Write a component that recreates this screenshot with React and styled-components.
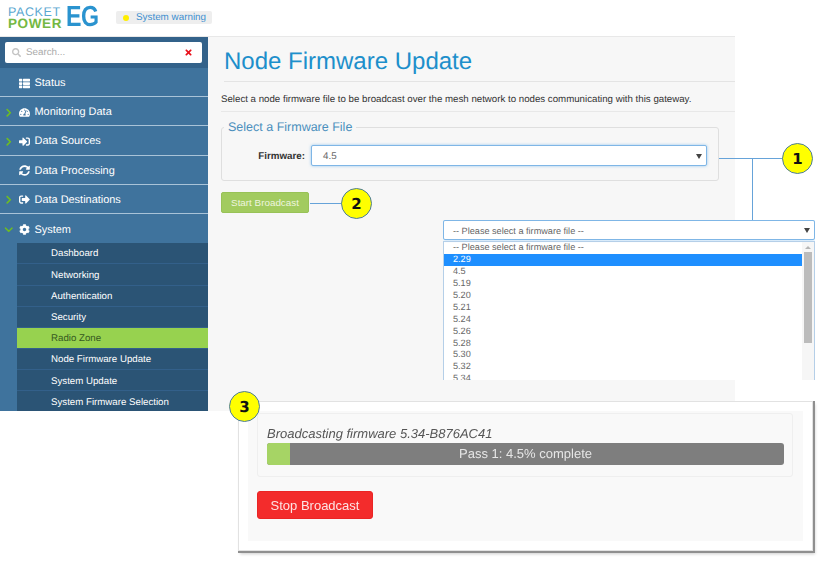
import React from "react";
import styled, { createGlobalStyle } from "styled-components";
import {
  FaThList,
  FaTachometerAlt,
  FaSignInAlt,
  FaSyncAlt,
  FaSignOutAlt,
  FaCog,
  FaTimes,
  FaSearch,
  FaChevronRight,
  FaChevronDown,
} from "react-icons/fa";

const GlobalStyle = createGlobalStyle`
  html, body {
    margin: 0;
    background: #fff;
    font-family: "Liberation Sans", Arial, sans-serif;
    text-rendering: geometricPrecision;
  }
  * { box-sizing: border-box; }
`;

const Page = styled.div`
  position: relative;
  width: 820px;
  height: 561px;
  overflow: hidden;
  background: #fff;
`;

// Header
const Header = styled.header`
  display: flex;
  align-items: flex-start;
  height: 37px;
  padding: 7px 0 0 8px;
  border-bottom: 1px solid #e8e8e8;
  width: 735px;
`;

const Logo = styled.div`
  display: flex;
  width: 108px;
  height: 22px;
`;

const LogoWords = styled.div`
  display: flex;
  flex-direction: column;
  width: 58px;
`;

const LogoPacket = styled.span`
  font-size: 12.5px;
  line-height: 10px;
  height: 10px;
  letter-spacing: 0.6px;
  color: #5aa7d0;
  white-space: nowrap;
`;

const LogoPower = styled.span`
  margin-top: 1px;
  font-size: 13.5px;
  line-height: 11px;
  font-weight: 700;
  letter-spacing: 0.6px;
  color: #74b843;
  white-space: nowrap;
`;

const LogoMark = styled.span`
  font-size: 29px;
  line-height: 21px;
  font-weight: 700;
  color: #2a93cf;
  transform: scaleX(0.8);
  transform-origin: left center;
  letter-spacing: -0.5px;
`;

const Warning = styled.div`
  display: flex;
  align-items: center;
  height: 13px;
  margin-top: 4px;
  padding: 0 6px 0 7px;
  background: #eeeeee;
  border-radius: 2px;
  font-size: 9.85px;
  color: #3d8fd0;
  gap: 7px;
`;

const WarningDot = styled.span`
  width: 6px;
  height: 6px;
  border-radius: 50%;
  background: #ffee00;
`;

// Sidebar
const Main = styled.div`
  display: flex;
  width: 735px;
  height: 374px;
`;

const Sidebar = styled.nav`
  width: 208px;
  flex: none;
  background: #3f739d;
  color: #fff;
  overflow: hidden;
`;

const SearchStrip = styled.div`
  height: 31px;
  padding: 5px 6px 5px 5px;
  background: #33628a;
`;

const SearchBox = styled.div`
  display: flex;
  align-items: center;
  height: 21px;
  padding: 0 9px 0 7px;
  background: #fff;
  border-radius: 2px;
  font-size: 9.8px;
  color: #aaa;
  gap: 5px;
`;

const SearchText = styled.span`
  flex: 1;
`;

const NavRow = styled.div`
  position: relative;
  display: flex;
  align-items: center;
  height: 29.2px;
  padding: 2px 0 0 18px;
  font-size: 10.95px;
  border-bottom: ${(p) => (p.$last ? "none" : "1px solid #a9c3d8")};
`;

const Chevron = styled.span`
  display: flex;
  justify-content: center;
  width: 10px;
  margin-left: -14px;
  margin-right: 4px;
  color: #6fbf1f;
  font-size: 9.5px;
`;

const NavIcon = styled.span`
  display: flex;
  justify-content: center;
  width: 12px;
  margin-right: 4.5px;
  font-size: 11px;
`;

const SubList = styled.div`
  margin-left: 17px;
  background: #2b5475;
`;

const SubItem = styled.div`
  display: flex;
  align-items: center;
  height: 21.2px;
  padding: 1.5px 0 0 34px;
  font-size: 9.7px;
  white-space: nowrap;
  border-bottom: 1px solid #33608a;
  background: ${(p) => (p.$active ? "#97d24f" : "transparent")};
  color: ${(p) => (p.$active ? "#35591f" : "#fff")};
`;

// Content
const Content = styled.main`
  flex: 1;
  background: #f7f7f7;
  padding: 0 0 0 13px;
`;

const Title = styled.h1`
  margin: 0 0 0 3px;
  height: 45px;
  padding-top: 10px;
  font-size: 24px;
  line-height: 30px;
  font-weight: 400;
  color: #1d8fcb;
  border-bottom: 1px solid #e4e4e4;
`;

const Intro = styled.p`
  margin: 0;
  height: 30px;
  padding-top: 12px;
  font-size: 9.7px;
  line-height: 12px;
  color: #333;
  white-space: nowrap;
  border-bottom: 1px solid #e8e8e8;
`;

const Group = styled.fieldset`
  width: 498px;
  height: 60px;
  margin: 9px 0 0;
  padding: 11px 11px 0 0;
  border: 1px solid #dfdfdf;
  border-radius: 3px;
  display: block;
`;

const GroupTitle = styled.legend`
  margin-left: 2px;
  padding: 0 4px;
  font-size: 12.5px;
  line-height: 13px;
  color: #4b8fbd;
`;

const FieldRow = styled.div`
  display: flex;
  align-items: center;
  justify-content: flex-end;
  gap: 6px;
`;

const FieldLabel = styled.label`
  padding-top: 2px;
  font-size: 9.8px;
  font-weight: 700;
  color: #333;
`;

const SelectBox = styled.div`
  display: flex;
  align-items: center;
  justify-content: space-between;
  width: ${(p) => p.$width}px;
  height: ${(p) => p.$height}px;
  padding: 1px 4px 0 ${(p) => p.$inset}px;
  background: #fff;
  border: 1px solid #7fb6e6;
  border-radius: 2px;
  box-shadow: 0 0 3px rgba(102, 175, 233, 0.7);
  font-size: ${(p) => p.$size}px;
  color: #666;
`;

const Caret = styled.span`
  width: 0;
  height: 0;
  border-left: 3px solid transparent;
  border-right: 3px solid transparent;
  border-top: 5px solid #444;
`;

const StartButton = styled.button`
  display: block;
  width: 88px;
  height: 21px;
  margin-top: 11px;
  padding: 0;
  background: #a2cb5f;
  border: 1px solid #98c257;
  border-radius: 2px;
  font: 9.85px "Liberation Sans", Arial, sans-serif;
  color: #eef5df;
`;

// Callouts on top of the page
const Badge = styled.div`
  position: absolute;
  left: ${(p) => p.$x}px;
  top: ${(p) => p.$y}px;
  display: flex;
  align-items: center;
  justify-content: center;
  width: 31px;
  height: 31px;
  background: #ffff00;
  border: 1px solid #4d7d99;
  border-radius: 50%;
  font-family: "DejaVu Sans", sans-serif;
  font-size: 15px;
  font-weight: 700;
  color: #111;
  z-index: 3;
`;

const Wire = styled.div`
  position: absolute;
  left: ${(p) => p.$x}px;
  top: ${(p) => p.$y}px;
  width: ${(p) => p.$w}px;
  height: ${(p) => p.$h}px;
  background: #66a3d9;
`;

const Dropdown = styled.div`
  position: absolute;
  left: 443px;
  top: 220px;
  width: 372px;
  height: 160px;
  overflow: hidden;
  background: #fff;
`;

const OptionsPanel = styled.div`
  display: flex;
  height: 140px;
  margin-top: 1px;
  border: 1px solid #b5cfe8;
  border-bottom: none;
`;

const Options = styled.div`
  flex: 1;
  overflow: hidden;
`;

const Option = styled.div`
  height: 11.95px;
  padding-left: 9px;
  font-size: 9.15px;
  line-height: 11.5px;
  background: ${(p) => (p.$selected ? "#1e8fff" : "transparent")};
  color: ${(p) => (p.$selected ? "#fff" : "#666")};
`;

const Scrollbar = styled.div`
  display: flex;
  flex-direction: column;
  align-items: center;
  width: 12px;
  background: #f6f6f6;
`;

const ScrollArrow = styled.span`
  margin-top: 4px;
  width: 0;
  height: 0;
  border-left: 3px solid transparent;
  border-right: 3px solid transparent;
  border-bottom: 3px solid #b5b5b5;
`;

const ScrollThumb = styled.div`
  width: 8px;
  height: 91px;
  margin-top: 3px;
  background: #bcbcbc;
`;

const ProgressPanel = styled.section`
  position: absolute;
  left: 238px;
  top: 401px;
  width: 575px;
  height: 150px;
  padding: 9px;
  background: #fff;
  border: 1px solid #e2e2e2;
  box-shadow: 1px 1px 0 1px #8f8f8f, 2px 3px 3px rgba(0, 0, 0, 0.2);
  filter: blur(0.5px);
`;

const ProgressInner = styled.div`
  height: 100%;
  padding: 2px 10px 0 9px;
  background: #f9f9f9;
`;

const Well = styled.div`
  height: 64px;
  padding: 13px 8px 0 9px;
  border: 1px solid #efefef;
  border-radius: 3px;
`;

const WellTitle = styled.div`
  font-size: 13px;
  line-height: 14px;
  font-style: italic;
  color: #555;
  white-space: nowrap;
`;

const Bar = styled.div`
  position: relative;
  height: 22px;
  margin-top: 2px;
  overflow: hidden;
  background: #7e7e7e;
  border-radius: 3px;
`;

const BarFill = styled.div`
  height: 100%;
  background: #a6d465;
`;

const BarLabel = styled.span`
  position: absolute;
  inset: 0;
  text-align: center;
  font-size: 13px;
  line-height: 22px;
  color: #e6e6e6;
`;

const StopButton = styled.button`
  display: block;
  width: 116px;
  height: 28px;
  margin-top: 14px;
  padding: 0;
  background: #f32c2c;
  border: 1px solid #ea2525;
  border-radius: 3px;
  font: 13px "Liberation Sans", Arial, sans-serif;
  color: #fde4e4;
`;

const navItems = [
  { label: "Status", icon: <FaThList /> },
  { label: "Monitoring Data", icon: <FaTachometerAlt />, chevron: "right" },
  { label: "Data Sources", icon: <FaSignInAlt />, chevron: "right" },
  { label: "Data Processing", icon: <FaSyncAlt /> },
  { label: "Data Destinations", icon: <FaSignOutAlt />, chevron: "right" },
  { label: "System", icon: <FaCog />, chevron: "down", last: true },
];

const subItems = [
  "Dashboard",
  "Networking",
  "Authentication",
  "Security",
  "Radio Zone",
  "Node Firmware Update",
  "System Update",
  "System Firmware Selection",
];

const firmwareFiles = ["2.29", "4.5", "5.19", "5.20", "5.21", "5.24", "5.26", "5.28", "5.30", "5.32", "5.34"];

const App = () => (
  <Page>
    <GlobalStyle />
    <Header>
      <Logo>
        <LogoWords>
          <LogoPacket>PACKET</LogoPacket>
          <LogoPower>POWER</LogoPower>
        </LogoWords>
        <LogoMark>EG</LogoMark>
      </Logo>
      <Warning>
        <WarningDot />
        System warning
      </Warning>
    </Header>
    <Main>
      <Sidebar>
        <SearchStrip>
          <SearchBox>
            <FaSearch color="#c4c4c4" size={9} />
            <SearchText>Search...</SearchText>
            <FaTimes color="#e8101a" size={9} />
          </SearchBox>
        </SearchStrip>
        {navItems.map((item) => (
          <NavRow key={item.label} $last={item.last}>
            {item.chevron ? (
              <Chevron>{item.chevron === "down" ? <FaChevronDown /> : <FaChevronRight />}</Chevron>
            ) : (
              <Chevron />
            )}
            <NavIcon>{item.icon}</NavIcon>
            {item.label}
          </NavRow>
        ))}
        <SubList>
          {subItems.map((label) => (
            <SubItem key={label} $active={label === "Radio Zone"}>
              {label}
            </SubItem>
          ))}
        </SubList>
      </Sidebar>
      <Content>
        <Title>Node Firmware Update</Title>
        <Intro>Select a node firmware file to be broadcast over the mesh network to nodes communicating with this gateway.</Intro>
        <Group>
          <GroupTitle>Select a Firmware File</GroupTitle>
          <FieldRow>
            <FieldLabel>Firmware:</FieldLabel>
            <SelectBox $width={396} $height={21} $inset={11} $size={9.8}>
              4.5
              <Caret />
            </SelectBox>
          </FieldRow>
        </Group>
        <StartButton>Start Broadcast</StartButton>
      </Content>
    </Main>

    <Wire $x={310} $y={203} $w={32} $h={1} />
    <Badge $x={341} $y={188}>2</Badge>

    <Wire $x={719} $y={158} $w={64} $h={1} />
    <Wire $x={752} $y={158} $w={1} $h={62} />
    <Badge $x={782} $y={143}>1</Badge>

    <Dropdown>
      <SelectBox $width={372} $height={20} $inset={9} $size={9.15}>
        -- Please select a firmware file --
        <Caret />
      </SelectBox>
      <OptionsPanel>
        <Options>
          <Option>-- Please select a firmware file --</Option>
          {firmwareFiles.map((file) => (
            <Option key={file} $selected={file === "2.29"}>
              {file}
            </Option>
          ))}
        </Options>
        <Scrollbar>
          <ScrollArrow />
          <ScrollThumb />
        </Scrollbar>
      </OptionsPanel>
    </Dropdown>

    <ProgressPanel>
      <ProgressInner>
        <Well>
          <WellTitle>Broadcasting firmware 5.34-B876AC41</WellTitle>
          <Bar>
            <BarLabel>Pass 1: 4.5% complete</BarLabel>
            <BarFill style={{ width: "4.5%" }} />
          </Bar>
        </Well>
        <StopButton>Stop Broadcast</StopButton>
      </ProgressInner>
    </ProgressPanel>
    <Badge $x={229} $y={391}>3</Badge>
  </Page>
);

export default App;
